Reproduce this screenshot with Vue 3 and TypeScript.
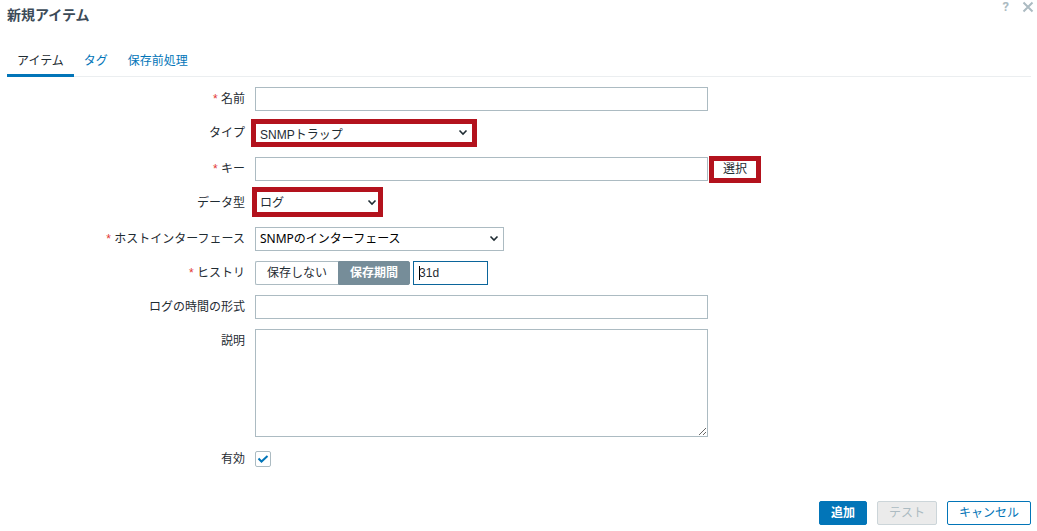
<script setup lang="ts">
import { ref } from 'vue'

const tabs = ['アイテム', 'タグ', '保存前処理']
const activeTab = ref(0)

const name = ref('')
const itemType = ref('SNMPトラップ')
const key = ref('')
const valueType = ref('ログ')
const hostInterface = ref('SNMPのインターフェース')
const historyMode = ref('keep')
const history = ref('31d')
const logTimeFormat = ref('')
const description = ref('')
const enabled = ref(true)
</script>

<template>
  <main class="dialog">
    <header class="head">
      <h1>新規アイテム</h1>
      <div class="head-tools">
        <a class="help" href="#" aria-label="ヘルプ">?</a>
        <button class="close" type="button" aria-label="閉じる">
          <svg viewBox="0 0 12 12" width="12" height="12">
            <path d="M1.5 1.5 10.5 10.5M10.5 1.5 1.5 10.5" />
          </svg>
        </button>
      </div>
    </header>

    <nav class="tabs">
      <a
        v-for="(tab, i) in tabs"
        :key="tab"
        href="#"
        :class="{ active: activeTab === i }"
        @click.prevent="activeTab = i"
      >{{ tab }}</a>
    </nav>

    <form id="item-form" class="form" @submit.prevent>
      <label class="required" for="name">名前</label>
      <div class="field"><input id="name" v-model="name" class="box wide" type="text" /></div>

      <label for="type">タイプ</label>
      <div class="field marked-row">
        <div class="pick pick-type marked">
          <select id="type" v-model="itemType"><option>SNMPトラップ</option></select>
          <svg class="chevron" viewBox="0 0 10 7" width="10" height="7"><path d="M1.5 1.5 5 5 8.5 1.5" /></svg>
        </div>
      </div>

      <label class="required" for="key">キー</label>
      <div class="field">
        <input id="key" v-model="key" class="box wide" type="text" />
        <button class="choose marked" type="button">選択</button>
      </div>

      <label for="value-type">データ型</label>
      <div class="field marked-row">
        <div class="pick pick-value marked">
          <select id="value-type" v-model="valueType"><option>ログ</option></select>
          <svg class="chevron" viewBox="0 0 10 7" width="10" height="7"><path d="M1.5 1.5 5 5 8.5 1.5" /></svg>
        </div>
      </div>

      <label class="required" for="interface">ホストインターフェース</label>
      <div class="field">
        <div class="pick pick-interface">
          <select id="interface" v-model="hostInterface"><option>SNMPのインターフェース</option></select>
          <svg class="chevron" viewBox="0 0 10 7" width="10" height="7"><path d="M1.5 1.5 5 5 8.5 1.5" /></svg>
        </div>
      </div>

      <label class="required" for="history">ヒストリ</label>
      <div class="field">
        <div class="segments">
          <label><input v-model="historyMode" type="radio" name="history-mode" value="none" /><span>保存しない</span></label>
          <label><input v-model="historyMode" type="radio" name="history-mode" value="keep" /><span>保存期間</span></label>
        </div>
        <div class="history">
          <input id="history" v-model="history" class="box" type="text" />
          <i class="caret"></i>
        </div>
      </div>

      <label for="log-format">ログの時間の形式</label>
      <div class="field"><input id="log-format" v-model="logTimeFormat" class="box wide" type="text" /></div>

      <label for="description">説明</label>
      <div class="field"><textarea id="description" v-model="description" class="box wide"></textarea></div>

      <label for="enabled">有効</label>
      <div class="field check">
        <input id="enabled" v-model="enabled" type="checkbox" />
        <svg v-if="enabled" viewBox="0 0 16 16" width="16" height="16"><path d="M3.5 7.5 6.5 10.500 12.5 5" /></svg>
      </div>
    </form>

    <footer class="actions">
      <button class="primary" type="submit" form="item-form">追加</button>
      <button type="button" disabled>テスト</button>
      <button type="button">キャンセル</button>
    </footer>
  </main>
</template>

<style>
body {
  background: #fff;
}
</style>

<style scoped>
.dialog,
.dialog * {
  box-sizing: border-box;
}
.dialog {
  padding: 0 6px 6px 7px;
  color: #1f2c33;
  font: 12px/24px "Liberation Sans", "Noto Sans CJK JP", sans-serif;
}
input,
select,
textarea,
button {
  margin: 0;
  color: inherit;
  font: inherit;
  outline: none;
}
a {
  text-decoration: none;
}
.head {
  display: flex;
  justify-content: space-between;
  height: 46px;
}
h1 {
  margin: 0;
  padding-top: 3px;
  color: #3c4b58;
  font-size: 14px;
  font-weight: 700;
  line-height: 24px;
}
.head-tools {
  display: flex;
  gap: 13px;
  height: 14px;
  margin-right: -3px;
}
.help {
  color: #acbbc2;
  font: bold 13px/14px Roboto, sans-serif;
}
.close {
  padding: 0;
  border: 0;
  background: none;
  line-height: 0;
}
.close path {
  fill: none;
  stroke: #acbbc2;
  stroke-width: 2;
}
.tabs {
  display: flex;
  border-bottom: 1px solid #ebeef0;
}
.tabs a {
  height: 31px;
  margin-bottom: -1px;
  padding: 0 10px;
  border-bottom: 3px solid transparent;
  color: #0275b8;
  line-height: 30px;
}
.tabs a.active {
  border-color: #0275b8;
  color: #1f2c33;
}
.form {
  display: grid;
  grid-template-columns: minmax(0, 238px) minmax(0, 1fr);
  gap: 10px;
  padding-top: 10px;
}
.form > label {
  text-align: right;
}
.required::before {
  content: "* ";
  color: #e33734;
}
.field {
  display: flex;
  align-items: flex-start;
  min-height: 24px;
}
.marked-row {
  height: 26px;
  align-items: flex-end;
}
.box {
  height: 24px;
  padding: 0 5px;
  border: 1px solid #acbbc2;
  border-radius: 0;
  background: #fff;
}
.wide {
  flex: 0 1 453px;
  min-width: 0;
}
textarea.box {
  height: 108px;
  resize: both;
}
.pick {
  position: relative;
  height: 24px;
  border: 1px solid #acbbc2;
}
.pick select {
  display: block;
  width: 100%;
  height: 100%;
  padding: 0 24px 0 4px;
  border: 0;
  border-radius: 0;
  background: transparent;
  color: #000;
  line-height: 18px;
  appearance: none;
}
.chevron {
  position: absolute;
  top: 7px;
  right: 4px;
  pointer-events: none;
}
.chevron path {
  fill: none;
  stroke: #1f2c33;
  stroke-width: 1.6;
}
.marked,
.pick.marked {
  border: 5px solid #b3121d;
}
.marked select {
  padding-top: 2px;
  color: #1f2c33;
}
.pick-type {
  width: 226px;
  height: 28px;
  margin-left: -4px;
}
.pick-type .chevron {
  top: 5px;
}
.pick-value {
  width: 131px;
  height: 30px;
  margin-left: -3px;
}
.pick-value .chevron {
  right: 1px;
}
.pick-value select {
  padding-left: 3px;
}
.pick-interface {
  width: 249px;
}
.pick-interface select {
  font-family: "Noto Sans", "Noto Sans CJK JP", sans-serif;
}
.choose {
  width: 52px;
  height: 27px;
  margin: -1px 0 -2px 1px;
  padding: 0 0 1px;
  background: #fff;
  line-height: 16px;
}
.segments {
  display: flex;
}
.segments input {
  position: absolute;
  opacity: 0;
}
.segments span {
  display: block;
  height: 24px;
  padding: 0 11px;
  border: 1px solid #acbbc2;
  line-height: 22px;
}
.segments label:first-child span {
  border-right: 0;
  border-radius: 2px 0 0 2px;
}
.segments label:last-child span {
  border-radius: 0 2px 2px 0;
}
.segments input:checked + span {
  border-color: #768d99;
  background: #768d99;
  color: #fff;
  font-weight: 700;
}
.history {
  position: relative;
  margin-left: 3px;
}
.history .box {
  display: block;
  width: 75px;
  border-color: #0b659b;
}
.caret {
  position: absolute;
  top: 5px;
  left: 6px;
  width: 1px;
  height: 14px;
  background: #000;
}
.check {
  position: relative;
  align-items: center;
}
.check input {
  width: 16px;
  height: 16px;
  border: 1px solid #acbbc2;
  border-radius: 2px;
  background: #fff;
  appearance: none;
}
.check svg {
  position: absolute;
  left: 0;
  pointer-events: none;
}
.check path {
  fill: none;
  stroke: #0275b8;
  stroke-width: 2;
}
.actions {
  display: flex;
  justify-content: flex-end;
  gap: 10px;
  padding-top: 30px;
}
.actions button {
  height: 24px;
  padding: 0 11px;
  border: 1px solid #0275b8;
  border-radius: 2px;
  background: #fff;
  color: #0275b8;
  line-height: 22px;
}
.actions .primary {
  background: #0275b8;
  color: #fff;
  font-weight: 700;
}
.actions button:disabled {
  border-color: #ccd5d9;
  background: #ebebeb;
  color: #acbbc2;
}
</style>
